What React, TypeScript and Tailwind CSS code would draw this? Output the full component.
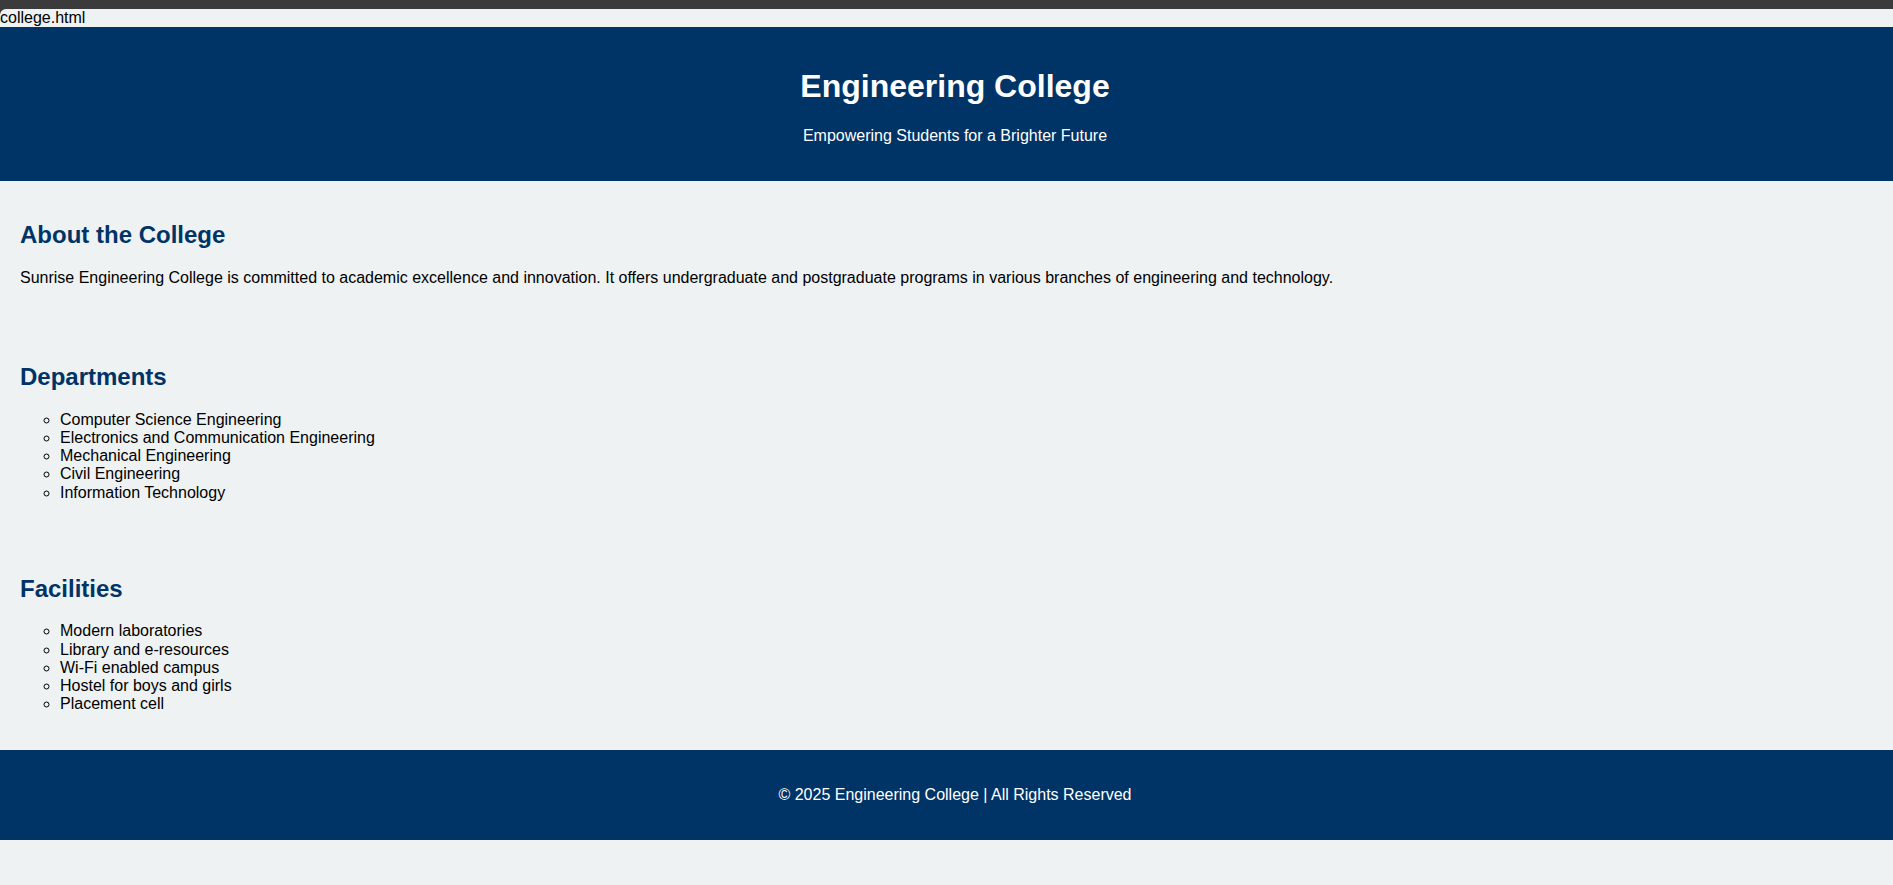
export default function App() {
  const departments = [
    "Computer Science Engineering",
    "Electronics and Communication Engineering",
    "Mechanical Engineering",
    "Civil Engineering",
    "Information Technology",
  ];
  const facilities = [
    "Modern laboratories",
    "Library and e-resources",
    "Wi-Fi enabled campus",
    "Hostel for boys and girls",
    "Placement cell",
  ];
  return (
    <div className="min-h-[885px] bg-[#3b3b3b] font-['Liberation_Sans',Arial,sans-serif] text-black">
      <div className="h-[9px]" />
      <div className="min-h-[876px] rounded-tl-[6px] bg-[#eef2f3]">
        <div className="text-[16px] leading-[18px]">college.html</div>
        <header className="bg-[#003366] py-5 pl-[37px] pr-5 text-center text-white">
          <h1 className="my-[21.44px] text-[32px] font-bold leading-[37px]">Engineering College</h1>
          <p className="my-4 text-[16px] leading-[18.4px]">Empowering Students for a Brighter Future</p>
        </header>
        <section className="p-5">
          <h2 className="mt-[20px] mb-[20px] text-[24px] font-bold leading-[27.6px] text-[#003366]">About the College</h2>
          <p className="my-4 text-[16px] leading-[18.4px]">
            Sunrise Engineering College is committed to academic excellence and innovation. It offers undergraduate and postgraduate programs in various branches of engineering and technology.
          </p>
        </section>
        <section className="p-5">
          <h2 className="mt-[20px] mb-[20px] text-[24px] font-bold leading-[27.6px] text-[#003366]">Departments</h2>
          <ul className="mt-4 mb-[13px] list-[circle] pl-10 text-[16px] leading-[18.2px]">
            {departments.map((d) => (
              <li key={d}>{d}</li>
            ))}
          </ul>
        </section>
        <section className="p-5">
          <h2 className="mt-[20px] mb-[20px] text-[24px] font-bold leading-[27.6px] text-[#003366]">Facilities</h2>
          <ul className="my-4 list-[circle] pl-10 text-[16px] leading-[18.2px]">
            {facilities.map((d) => (
              <li key={d}>{d}</li>
            ))}
          </ul>
        </section>
        <footer className="bg-[#003366] py-5 pl-[37px] pr-5 text-center text-white">
          <p className="my-4 text-[16px] leading-[18.4px]">© 2025 Engineering College | All Rights Reserved</p>
        </footer>
      </div>
    </div>
  );
}
